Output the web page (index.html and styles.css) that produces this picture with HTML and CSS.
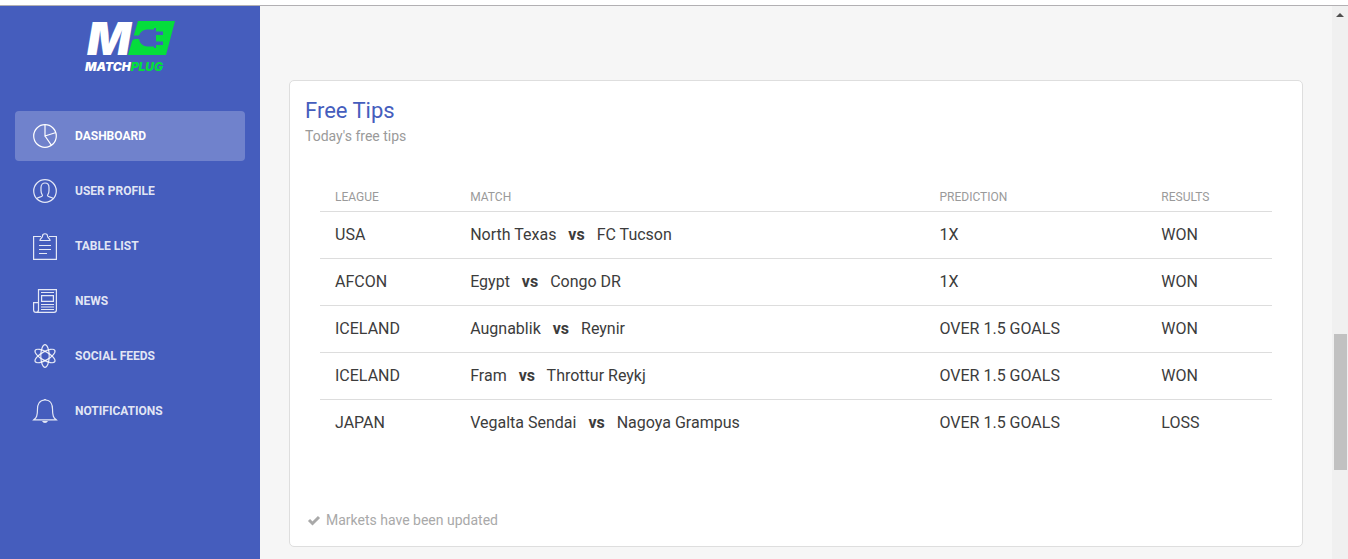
FILE: index.html
```html
<!DOCTYPE html>
<html lang="en">
<head>
<meta charset="utf-8">
<meta name="viewport" content="width=device-width, initial-scale=1">
<title>MatchPlug</title>
<link rel="stylesheet" href="styles.css">
</head>
<body>
<div class="wrapper">
  <aside class="sidebar">
    <a class="logo" href="#" aria-label="MatchPlug">
      <svg width="92" height="54" viewBox="0 0 92 54">
        <text class="logo-m" x="2" y="36">M</text>
        <path fill="#05dd3c" d="M53 2H90L81 36H43Z"/>
        <path fill="#455dbd" d="M47 16.500H54Q56 11 62 10.500H69V9H71V12.500H78V16H71V22.500H78V26H71V29H69V27.500H62Q55 26.500 54 20H50Q48 20 46 23Z"/>
        <text class="logo-word" x="0" y="52">MATCH<tspan class="logo-plug">PLUG</tspan></text>
      </svg>
    </a>
    <nav class="nav">
      <a class="nav-link active" href="#">
        <svg class="icon" viewBox="0 0 24 24"><circle cx="12" cy="12" r="11.300"/><path d="M12 .7V12L23 8.500M12 12L18.500 21.300"/></svg>
        Dashboard</a>
      <a class="nav-link" href="#">
        <svg class="icon" viewBox="0 0 24 24"><circle cx="12" cy="12" r="11.300"/><path d="M4 19.500C5 17.800 9.500 18.500 9.500 16.500C9.500 15.500 8 15 8 11.500V8.500C8 2.500 16 2.500 16 8.500V11.500C16 15 14.500 15.500 14.500 16.500C14.500 18.500 19 17.800 20 19.500"/></svg>
        User Profile</a>
      <a class="nav-link" href="#">
        <svg class="icon icon-tall" viewBox="0 0 24 27"><path d="M8 3.500H.6V26.400H23.400V3.500H16M7 7.500H17C17 5 14.500 5 14.500 3C14.500 0 9.500 0 9.500 3C9.500 5 7 5 7 7.500ZM6 12.500H18M6 16.500H18M6 20.500H14"/></svg>
        Table List</a>
      <a class="nav-link" href="#">
        <svg class="icon" viewBox="0 0 24 24"><path d="M5.500 20V.6H23.400V21Q23.400 23.400 21 23.400H3Q.6 23.400 .6 21V13.600H5.500V21Q5.500 23.400 3 23.400M8 3.500H21M8.600 6.600H20.400V12.400H8.600ZM8 15.500H21M8 18H21M8 20.500H21"/></svg>
        News</a>
      <a class="nav-link" href="#">
        <svg class="icon" viewBox="0 0 24 24"><ellipse cx="12" cy="12" rx="4.200" ry="11.300"/><ellipse cx="12" cy="12" rx="4.200" ry="11.300" transform="rotate(60 12 12)"/><ellipse cx="12" cy="12" rx="4.200" ry="11.300" transform="rotate(-60 12 12)"/></svg>
        Social Feeds</a>
      <a class="nav-link" href="#">
        <svg class="icon" viewBox="0 0 24 24"><path d="M12 1C6 1 4.500 6 4.500 10C4.500 17 3.500 18.500 .8 20.800H23.200C20.500 18.500 19.500 17 19.500 10C19.500 6 18 1 12 1Z"/><path class="solid" d="M9 22H15Q14 24 12 24T9 22ZM10.500 1Q12-1 13.500 1Z"/></svg>
        Notifications</a>
    </nav>
  </aside>
  <main class="content">
    <section class="card">
      <header class="card-header">
        <h4 class="title">Free Tips</h4>
        <p class="category">Today's free tips</p>
      </header>
      <div class="table-wrap">
        <table class="table">
          <thead>
            <tr><th class="col-league">League</th><th class="col-match">Match</th><th class="col-prediction">Prediction</th><th>Results</th></tr>
          </thead>
          <tbody>
            <tr><td>USA</td><td>North Texas <b class="vs">vs</b> FC Tucson</td><td>1X</td><td>WON</td></tr>
            <tr><td>AFCON</td><td>Egypt <b class="vs">vs</b> Congo DR</td><td>1X</td><td>WON</td></tr>
            <tr><td>ICELAND</td><td>Augnablik <b class="vs">vs</b> Reynir</td><td>OVER 1.5 GOALS</td><td>WON</td></tr>
            <tr><td>ICELAND</td><td>Fram <b class="vs">vs</b> Throttur Reykj</td><td>OVER 1.5 GOALS</td><td>WON</td></tr>
            <tr><td>JAPAN</td><td>Vegalta Sendai <b class="vs">vs</b> Nagoya Grampus</td><td>OVER 1.5 GOALS</td><td>LOSS</td></tr>
          </tbody>
        </table>
      </div>
      <footer class="stats">
        <svg class="check" viewBox="0 0 14 12"><path d="M2 6L5.500 9.500L12 3"/></svg>
        Markets have been updated
      </footer>
    </section>
  </main>
  <div class="scrollbar" aria-hidden="true">
    <svg class="scroll-arrow" viewBox="0 0 8 4"><path d="M0 4L4 0L8 4Z"/></svg>
    <div class="scroll-thumb"></div>
  </div>
</div>
</body>
</html>
```
FILE: styles.css
```css
* { box-sizing: border-box; }

body {
  margin: 0;
  padding-top: 5px;
  background: #fff;
  color: #3c3c3c;
  font-family: Roboto, "Liberation Sans", sans-serif;
  font-size: 16px;
}

.wrapper {
  display: flex;
  min-height: calc(100vh - 5px);
  border-top: 1px solid #b2b0b3;
  background: #f6f6f6;
}

.sidebar {
  flex: 0 0 260px;
  padding: 13px 15px;
  background: #455dbd;
}

.logo {
  display: block;
  margin-bottom: 38px;
  padding-left: 70px;
}
.logo svg {
  display: block;
  overflow: visible;
}
.logo-m {
  fill: #fff;
  font: italic 900 46px Inter, sans-serif;
}
.logo-word {
  fill: #fff;
  font: italic 900 12px Inter, sans-serif;
}
.logo-plug { fill: #05dd3c; }

.nav {
  display: flex;
  flex-direction: column;
  gap: 5px;
}
.nav-link {
  display: flex;
  align-items: center;
  gap: 18px;
  height: 50px;
  padding: 0 18px;
  border-radius: 4px;
  color: rgba(255, 255, 255, 0.86);
  font-size: 12px;
  font-weight: 700;
  text-decoration: none;
  text-transform: uppercase;
}
.nav-link.active {
  background: rgba(255, 255, 255, 0.23);
  color: #fff;
}

.icon {
  width: 24px;
  height: 24px;
  overflow: visible;
  fill: none;
  stroke: currentColor;
  stroke-width: 1.2;
}
.icon-tall { height: 27px; }
.icon .solid { fill: currentColor; stroke: none; }

.content {
  flex: 1;
  min-width: 0;
  padding: 74px 29px 12px;
}
.card {
  border: 1px solid #dedede;
  border-radius: 5px;
  background: #fff;
}
.card-header { padding: 15px 15px 0; }
.title {
  margin: 0;
  color: #455dbd;
  font-size: 22px;
  font-weight: 400;
  line-height: 30px;
}
.category {
  margin: 0;
  color: #9a9a9a;
  font-size: 14px;
  line-height: 20px;
}

.table-wrap { padding: 37px 30px 0; }
.table {
  width: 100%;
  border-collapse: collapse;
  table-layout: fixed;
}
.table th {
  height: 28px;
  padding: 0 15px;
  color: #9a9a9a;
  font-size: 12px;
  font-weight: 400;
  text-align: left;
  text-transform: uppercase;
}
.table td {
  height: 47px;
  padding: 0 15px;
  border-top: 1px solid #ddd;
}
.col-league { width: 14.2%; }
.col-match { width: 49.3%; }
.col-prediction { width: 23.3%; }
.vs {
  margin: 0 8px;
  font-weight: 700;
}

.stats {
  display: flex;
  align-items: center;
  gap: 5px;
  padding: 63px 17px 15px;
  color: #a9a9a9;
  font-size: 14px;
  line-height: 22px;
}
.check {
  width: 14px;
  height: 12px;
  fill: none;
  stroke: currentColor;
  stroke-width: 3;
}

.scrollbar {
  display: flex;
  flex-direction: column;
  flex: 0 0 16px;
  align-items: center;
  padding-top: 7px;
  background: #f0f0f0;
}
.scroll-arrow {
  width: 8px;
  height: 4px;
  fill: #505050;
}
.scroll-thumb {
  width: 13px;
  height: 136px;
  margin-top: 317px;
  background: #c1c1c1;
}
```
